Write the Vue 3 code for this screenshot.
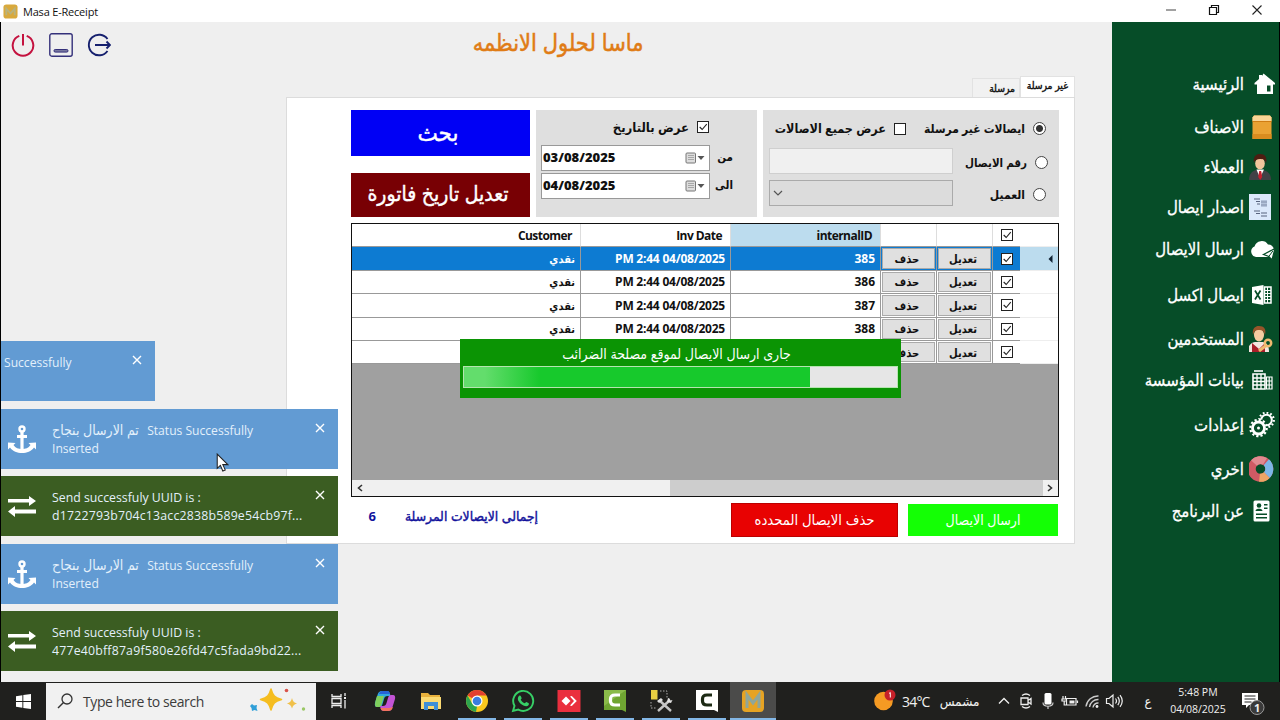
<script setup>
import { ref } from "vue";

// Menu lateral
const menu = ref([
  { icon: "home", label: "الرئيسية" },
  { icon: "box", label: "الاصناف" },
  { icon: "client", label: "العملاء" },
  { icon: "doc", label: "اصدار ايصال" },
  { icon: "cloud", label: "ارسال الايصال" },
  { icon: "excel", label: "ايصال اكسل" },
  { icon: "user", label: "المستخدمين" },
  { icon: "company", label: "بيانات المؤسسة" },
  { icon: "gears", label: "إعدادات" },
  { icon: "ring", label: "اخري" },
  { icon: "about", label: "عن البرنامج" },
]);

const receipts = ref([
  { id: "385", date: "PM 2:44 04/08/2025", customer: "نقدي" },
  { id: "386", date: "PM 2:44 04/08/2025", customer: "نقدي" },
  { id: "387", date: "PM 2:44 04/08/2025", customer: "نقدي" },
  { id: "388", date: "PM 2:44 04/08/2025", customer: "نقدي" },
  { id: "", date: "", customer: "" },
]);
const selected = ref(0);
const showAll = ref(false);
const progress = ref(80);

const toasts = ref([
  { type: "anchor", line1: "Successfully", line2: "", leaving: true },
  { type: "anchor", arabic: "تم الارسال بنجاح", line1: "  Status Successfully", line2: "Inserted" },
  { type: "swap", line1: "Send successfuly UUID is :", line2: "d1722793b704c13acc2838b589e54cb97f..." },
  { type: "anchor", arabic: "تم الارسال بنجاح", line1: "  Status Successfully", line2: "Inserted" },
  { type: "swap", line1: "Send successfuly UUID is :", line2: "477e40bff87a9f580e26fd47c5fada9bd22..." },
]);

const apps = ref([
  { icon: "tasks" },
  { icon: "copilot" },
  { icon: "folder" },
  { icon: "chrome", open: true },
  { icon: "whatsapp", open: true },
  { icon: "anydesk", open: true },
  { icon: "camtasia", open: true },
  { icon: "tools", open: true },
  { icon: "recorder", open: true },
  { icon: "masa", open: true, active: true },
]);
</script>

<template>
  <div class="screen">
    <header class="titlebar">
      <svg class="logo" viewBox="0 0 16 16">
        <rect x="0.5" y="0.5" width="15" height="15" rx="3" fill="#d9a93c" />
        <path d="M3.5 12V5l4.500 5 4.500-5v7" fill="none" stroke="#b9b27c" stroke-width="2" />
      </svg>
      <span class="app-name">Masa E-Receipt</span>
      <div class="win-buttons">
        <svg viewBox="0 0 12 12"><path d="M1 6h10" stroke="#444" /></svg>
        <svg viewBox="0 0 12 12"><path d="M1.500 3.500h7v7h-7zM3.500 3.500v-2h7v7h-2" fill="none" stroke="#111" stroke-width="1.200" /></svg>
        <svg viewBox="0 0 12 12"><path d="M1.500 1.500l9 9M10.500 1.500l-9 9" stroke="#222" stroke-width="1.100" /></svg>
      </div>
    </header>

    <div class="body">
      <main class="main">
        <div class="top">
          <div class="tools">
            <svg viewBox="0 0 24 24" class="tool">
              <path d="M8.300 2.900A10.300 10.300 0 1 0 15.700 2.900M12 1v11.500" fill="none" stroke="#c4123f" stroke-width="2" />
            </svg>
            <svg viewBox="0 0 24 24" class="tool">
              <rect x="0.800" y="0.800" width="22.400" height="22.400" rx="2" fill="none" stroke="#34307a" stroke-width="1.400" />
              <rect x="5" y="16.500" width="14" height="2.600" rx="1.200" fill="#77779f" stroke="#34307a" />
            </svg>
            <svg viewBox="0 0 24 24" class="tool">
              <path d="M20.500 6A10.300 10.300 0 1 0 20.500 18M8 12h15M19.500 8.500 23 12l-3.500 3.500" fill="none" stroke="#16206e" stroke-width="1.900" />
            </svg>
          </div>
          <h1 class="heading">ماسا لحلول الانظمه</h1>
        </div>

        <div class="tabs">
          <span class="tab active">غير مرسلة</span>
          <span class="tab">مرسلة</span>
        </div>

        <section class="panel">
          <div class="filters">
            <div class="box search-box">
              <label class="opt"><i class="radio on"></i>ايصالات غير مرسلة</label>
              <label class="opt all"><i class="check" :class="{ on: showAll }"></i>عرض جميع الاصالات</label>
              <label class="opt number"><i class="radio"></i>رقم الايصال</label>
              <div class="field"></div>
              <label class="opt"><i class="radio"></i>العميل</label>
              <div class="combo">
                <svg viewBox="0 0 10 6"><path d="M1 1l4 4 4-4" fill="none" stroke="#555" stroke-width="1.200" /></svg>
              </div>
            </div>

            <div class="box date-box">
              <label class="opt by-date">
                <i class="check on"><svg viewBox="0 0 12 12"><path d="M2 6l3 3 5.500-6.500" /></svg></i>عرض بالتاريخ
              </label>
              <span class="date-label">من</span>
              <div class="date">
                <b>03/08/2025</b>
                <svg viewBox="0 0 20 12">
                  <rect x="1" y="1" width="9.500" height="10" rx="1" fill="#ddd" stroke="#777" />
                  <path d="M3 3.500h6M3 5.500h6M3 7.500h6" stroke="#999" stroke-width="0.800" />
                  <path d="M12.500 4h7L16 8z" fill="#555" />
                </svg>
              </div>
              <span class="date-label">الى</span>
              <div class="date">
                <b>04/08/2025</b>
                <svg viewBox="0 0 20 12">
                  <rect x="1" y="1" width="9.500" height="10" rx="1" fill="#ddd" stroke="#777" />
                  <path d="M3 3.500h6M3 5.500h6M3 7.500h6" stroke="#999" stroke-width="0.800" />
                  <path d="M12.500 4h7L16 8z" fill="#555" />
                </svg>
              </div>
            </div>

            <div class="actions">
              <button class="btn-search">بحث</button>
              <button class="btn-edit-date">تعديل تاريخ فاتورة</button>
            </div>
          </div>

          <div class="grid">
            <div class="row head">
              <span class="cell"></span>
              <span class="cell c-check"><i class="check on"><svg viewBox="0 0 12 12"><path d="M2 6l3 3 5.500-6.500" /></svg></i></span>
              <span class="cell"></span>
              <span class="cell"></span>
              <span class="cell sorted">internalID</span>
              <span class="cell">Inv Date</span>
              <span class="cell">Customer</span>
            </div>
            <div v-for="(r, i) in receipts" :key="i" class="row" :class="{ selected: i === selected }">
              <span class="cell marker">
                <svg v-if="i === selected" viewBox="0 0 5 8"><path d="M4.500 0v8L0.500 4z" fill="#123" /></svg>
              </span>
              <span class="cell c-check"><i class="check on"><svg viewBox="0 0 12 12"><path d="M2 6l3 3 5.500-6.500" /></svg></i></span>
              <span class="cell c-btn"><button>تعديل</button></span>
              <span class="cell c-btn"><button>حذف</button></span>
              <span class="cell">{{ r.id }}</span>
              <span class="cell c-date"><bdo dir="ltr">{{ r.date }}</bdo></span>
              <span class="cell c-customer">{{ r.customer }}</span>
            </div>
            <div class="void"></div>
            <div class="scroll">
              <svg viewBox="0 0 6 8"><path d="M5 1L1.500 4 5 7" /></svg>
              <div class="track"><div class="thumb"></div></div>
              <svg viewBox="0 0 6 8"><path d="M1 1l3.500 3L1 7" /></svg>
            </div>

            <!-- Aviso de envio sobre a tabela -->
            <div class="sending">
              <p>جارى ارسال الايصال لموقع مصلحة الضرائب</p>
              <div class="bar"><div class="fill" :style="{ width: progress + '%' }"></div></div>
            </div>
          </div>

          <div class="footer">
            <button class="btn-send">ارسال الايصال</button>
            <button class="btn-delete">حذف الايصال المحدده</button>
            <span class="total-label">إجمالى الايصالات المرسلة</span>
            <span class="total">6</span>
          </div>
        </section>
      </main>

      <nav class="sidebar">
        <a v-for="item in menu" :key="item.icon" class="menu-item">
          <svg viewBox="0 0 26 26" class="menu-icon">
            <g v-if="item.icon === 'home'" fill="#fff">
              <path d="M14.500 2.500 26 12v1.500h-2V23H8v-9.500H5.500V12L10 8V4h3v1z" />
              <rect x="18" y="14.500" width="3.500" height="6" fill="#064d28" />
            </g>
            <g v-else-if="item.icon === 'box'">
              <path d="M3.500 3.500 5 1.500h16l1.500 2V25h-19z" fill="#eaa233" />
              <path d="M3.500 3.500 5 1.500h16l1.500 2V7h-19z" fill="#fbd596" />
              <path d="M3.500 7.500h19" stroke="#d07d13" />
              <path d="M3.500 20h19v5h-19z" fill="#d98c1f" />
            </g>
            <g v-else-if="item.icon === 'client'">
              <path d="M0 26c0-6 3-9 7-10h7c5 1 8 4 8 10z" fill="#414146" />
              <path d="M7.500 15.500 11 24l4-8.500z" fill="#fff" />
              <path d="M10.200 17h2l1 6-2 3-2-3z" fill="#c3202e" />
              <ellipse cx="11" cy="9.500" rx="4.800" ry="6" fill="#f0c69c" />
              <path d="M5 9C4 2.500 7 0 11 0c5 0 7.500 3 6 9.500-1-4-3-4.500-6-4.500S6 6 5 9z" fill="#4c1d12" />
            </g>
            <g v-else-if="item.icon === 'doc'">
              <rect x="0" y="0" width="22" height="26" fill="#dbe9fb" />
              <path d="M5 5h6M7 7.500h4M8 10h3M12 8h6M12 11h6M5 17h6M7 19.500h4M12 19h6M12 22h6" stroke="#58647f" stroke-width="1.200" />
              <path d="M12 6h6v7h-6z" fill="#9bacc6" opacity="0.600" />
            </g>
            <g v-else-if="item.icon === 'cloud'">
              <path d="M7 21a5.500 5.500 0 0 1-1.500-10.500A7.500 7.500 0 0 1 19 8.500a6 6 0 0 1 5 9.500c-1 2-3 3-5 3z" fill="#fff" />
              <path d="M14.500 18.500 26 12.500 23 24l-3.200-3.500z" fill="#fff" stroke="#064d28" stroke-width="1.300" />
              <path d="m19.800 20.500 4-5.500M19.500 20v3.500" stroke="#064d28" />
            </g>
            <g v-else-if="item.icon === 'excel'">
              <path d="M15.500 5h6.500v16h-6.500z" fill="none" stroke="#fff" stroke-width="1.500" />
              <path d="M15 8.500h7M15 11.500h7M15 14.500h7M15 17.500h7M18.500 5v16" stroke="#fff" />
              <path d="M3 5 14.500 3v20L3 21z" fill="#fff" />
              <path d="m6 8.500 5.500 9M11.500 8.500l-5.500 9" stroke="#064d28" stroke-width="1.700" />
            </g>
            <g v-else-if="item.icon === 'user'">
              <path d="M-1 26c0-6 2-9 7-10h8c4 1 6 4 6 10z" fill="#f3e4df" />
              <path d="M3 26v-9l7 6 6-6v9z" fill="#a91f2a" />
              <ellipse cx="10" cy="9" rx="5" ry="6.500" fill="#f5cba0" />
              <path d="M4 9C3 2.500 6 0 10 0c5 0 7.500 3 6 9-1-4-3-5-6-5S5 5 4 9z" fill="#97542a" />
              <circle cx="19" cy="17" r="3.200" fill="none" stroke="#f0b96f" stroke-width="2.500" />
              <path d="m17 19.500-7 5.500" stroke="#f0b96f" stroke-width="3" />
            </g>
            <g v-else-if="item.icon === 'company'" fill="none" stroke="#fff">
              <path d="M5 4h9" stroke-width="1.600" />
              <path d="M4 7h12v15H4z" stroke-width="1.600" />
              <path d="M8 7v15M12 7v15M4 11h12M4 14.500h12M4 18h12" stroke-width="1.300" />
              <path d="M17.500 10h5.500v12h-5.500zM20.200 10v12M17.500 14h5.500M17.500 18h5.500" stroke-width="1.200" />
            </g>
            <g v-else-if="item.icon === 'gears'" fill="none" stroke="#fff">
              <circle cx="17.500" cy="8" r="5.300" stroke-width="2" />
              <circle cx="17.500" cy="8" r="7.300" stroke-width="2.200" stroke-dasharray="1.800 2" />
              <circle cx="9.500" cy="16" r="9" fill="#064d28" stroke="none" />
              <circle cx="9.500" cy="16" r="6" stroke-width="2.800" />
              <circle cx="9.500" cy="16" r="8.200" stroke-width="2.200" stroke-dasharray="2.200 2.090" />
              <circle cx="9.500" cy="16" r="1.500" fill="#fff" stroke="none" />
            </g>
            <g v-else-if="item.icon === 'ring'" fill="none" stroke-width="8">
              <circle cx="11.500" cy="13" r="8.800" stroke="#cf5a64" />
              <path d="M5 7A8.800 8.800 0 0 1 16 5.400" stroke="#e08a90" />
              <path d="M17.300 6.300A8.800 8.800 0 0 1 17.800 19.100" stroke="#7cb7e8" />
              <path d="M17.800 19.100A8.800 8.800 0 0 1 10.500 21.700" stroke="#eda566" />
            </g>
            <g v-else>
              <rect x="4.500" y="2.500" width="16" height="21" rx="1.500" fill="#fff" />
              <g fill="#064d28">
                <circle cx="10" cy="7.500" r="2.300" />
                <path d="M6.500 13c0-3 7-3 7 0zM15 6h3.500v1.500H15zM15 9.500h3.500V11H15zM7 15.500h11V17H7zM7 19h11v1.500H7z" />
              </g>
            </g>
          </svg>
          <span>{{ item.label }}</span>
        </a>
      </nav>

      <!-- Notificações -->
      <div class="toasts">
        <div v-for="(t, i) in toasts" :key="i" class="toast" :class="[t.type, { leaving: t.leaving }]">
          <svg v-if="!t.leaving && t.type === 'anchor'" class="toast-icon" viewBox="0 0 28 28">
            <circle cx="14" cy="4" r="2.500" fill="none" stroke="#fff" stroke-width="2.400" />
            <path d="M14 6.500V25M9 11.500h10" fill="none" stroke="#fff" stroke-width="3.200" />
            <path d="M0 17.500 7.500 18l-2 2c2 3 5 4 8.500 4s6.500-1 8.500-4l-2-2 7.500-.5v7l-2-2c-3 4-7 5.500-12 5.500S5 26.500 2 22.500l-2 2z" fill="#fff" />
          </svg>
          <svg v-else-if="!t.leaving" class="toast-icon" viewBox="0 0 28 28">
            <path d="M0 7h21V4l7 5-7 5v-3.500H0zM28 17.500H7V14l-7 5.500L7 25v-3.500h21z" fill="#fff" />
          </svg>
          <div class="toast-text">
            <p><span v-if="t.arabic" class="toast-ar">{{ t.arabic }}</span>{{ t.line1 }}</p>
            <p class="line2">{{ t.line2 }}</p>
          </div>
          <svg class="toast-close" viewBox="0 0 10 10"><path d="M1 1l8 8M9 1L1 9" stroke="#fff" stroke-width="1.400" /></svg>
        </div>
      </div>

      <svg class="cursor" viewBox="0 0 12 18">
        <path d="M1 1v13.500l3-2.800L6.300 17l2.300-1-2.300-5H11z" fill="#fff" stroke="#222" />
      </svg>
    </div>

    <footer class="taskbar">
      <div class="start">
        <svg viewBox="0 0 16 16"><path d="M0 2.300 6.800 1.300v6.200H0zM7.800 1.100 16 0v7.500H7.800zM0 8.500h6.800v6.200L0 13.700zM7.800 8.500H16V16l-8.200-1.100z" fill="#fff" /></svg>
      </div>
      <div class="search">
        <svg class="lens" viewBox="0 0 16 16"><circle cx="10" cy="6" r="5" fill="none" stroke="#333" stroke-width="1.300" /><path d="M6.500 9.500 1 15" stroke="#333" stroke-width="1.400" /></svg>
        <span>Type here to search</span>
        <svg class="sparkle" viewBox="0 0 58 26">
          <path d="M22 1c2 7 3.500 8.500 10.500 10.500C25.500 13.500 24 15 22 22c-2-7-3.500-8.500-10.500-10.500C18.500 9.500 20 8 22 1z" fill="#f5bd1f" stroke="#f5bd1f" stroke-width="1.500" stroke-linejoin="round" />
          <path d="M43 10c1 3.500 2 4.500 5 5.500-3 1-4 2-5 5-1-3-2-4-5-5 3-1 4-2 5-5.500z" fill="#f0c04a" />
          <path d="m3 16 2 1.500 3-.5-.5 3 1 3-3-1-2.500 1-.5-3-1.500-2z" fill="#2f9fd8" />
          <circle cx="37.500" cy="2.500" r="1.800" fill="#d9534a" />
          <circle cx="54.500" cy="21" r="1.700" fill="#9ac765" />
        </svg>
      </div>

      <div v-for="a in apps" :key="a.icon" class="app" :class="{ open: a.open, active: a.active }">
        <svg viewBox="0 0 24 24">
          <g v-if="a.icon === 'tasks'" fill="none" stroke="#eee" stroke-width="1.300">
            <path d="M5 5v2.500h9V5M5 19v-2.500h9V19M5 9.500h9v5H5zM18 4v3M18 11v8.500" />
            <rect x="17" y="8" width="2" height="2" fill="#eee" stroke="none" />
          </g>
          <g v-else-if="a.icon === 'copilot'">
            <path d="M9 2h5c2 0 2.500 1 3 3l.5 2h-3c-2 0-3 1-3.500 3L9.500 15c-.5 2-1.500 3-3 3H4c-2 0-2.500-2-2-4l2.500-8C5.500 3 6.500 2 9 2z" fill="#31a8e0" />
            <path d="M2.500 12 4 7h7l-3 10-1.500 1H4c-2 0-2.500-2-1.500-6z" fill="#7fcf5c" />
            <path d="M15 22h-4c-2 0-3-1-3.500-3l-.5-2h3c2 0 3-1 3.500-3L15 9c.5-2 1.500-3 3-3h2c2 0 2.500 2 2 4l-2.500 8c-1 3-2 4-4.500 4z" fill="#c353d4" />
            <path d="M15 22h-4c-2 0-3-1-3.500-3h9l3.500-1c-1 3-2.500 4-5 4z" fill="#f2735f" />
            <path d="M9 2h5c2 0 2.500 1 3 3H6c.7-2 1.500-3 3-3z" fill="#2763d6" />
          </g>
          <g v-else-if="a.icon === 'folder'">
            <path d="M2 4h7l2 2h10v14H2z" fill="#e8b13c" />
            <path d="M2 8h20v12H2z" fill="#fbda72" />
            <path d="M5 13h14v8h-4v-4H9v4H5z" fill="#3f8fd6" />
          </g>
          <g v-else-if="a.icon === 'chrome'">
            <circle cx="12" cy="12" r="11" fill="#f8c81e" />
            <path d="M12 12 2.500 6.500A11 11 0 0 1 21.500 6.500H12z" fill="#e2402f" />
            <path d="M2.500 6.500 7.300 14.800 12 17.500l-1 5.400A11 11 0 0 1 2.500 6.500z" fill="#2da44e" />
            <circle cx="12" cy="12" r="5.500" fill="#fff" />
            <circle cx="12" cy="12" r="4.300" fill="#3b7de0" />
          </g>
          <g v-else-if="a.icon === 'whatsapp'">
            <path d="M2 22l1.500-5.200A10 10 0 1 1 7.300 20.600z" fill="none" stroke="#37cf66" stroke-width="1.900" />
            <path d="M8 7c.8-.8 1.500-.5 2 .5l.6 1.500c.2.700-.8 1.300-.8 1.700 1 1.800 2.200 2.800 4 3.600.6 0 1-1.300 1.600-1.200l2 1c.8.500.5 1.500 0 2.200-1 1.200-2.800 1.200-5 .2-2.300-1-4.200-3-5.200-5C6.500 9.700 6.900 8 8 7z" fill="#37cf66" />
          </g>
          <g v-else-if="a.icon === 'anydesk'">
            <rect x="0.500" y="1" width="23" height="22" fill="#ea2f3e" />
            <path d="M9 7.500 13.500 12 9 16.500 4.500 12z" fill="#fff" />
            <path d="m13 7.500 1.800-.5 5 5-5 5-1.800-.5 4-4.500z" fill="#fff" />
          </g>
          <g v-else-if="a.icon === 'camtasia'">
            <path d="M1 1h22v22l-4-2H1z" fill="#6fa532" />
            <path d="M1 1h22L1 17z" fill="#8abb4a" />
            <path d="M17 6h-5c-3 0-4.500 1.500-4.500 4v2c0 2.500 1.500 4 4.500 4h5" fill="none" stroke="#fff" stroke-width="3.200" />
          </g>
          <g v-else-if="a.icon === 'tools'">
            <rect x="2" y="1" width="6.500" height="9.500" fill="#e9cf42" />
            <path d="M11 2h7v7M2 13v6h5" fill="none" stroke="#aaa" stroke-dasharray="1.500 1.500" />
            <path d="m10 11 12 11M20 12 9 22" stroke="#c5c5c5" stroke-width="2.400" />
            <path d="m8 12 4-3 2 2-4 3zM19 9l-1 4 4 1 1.500-3-2 .5-1-2z" fill="#e2e2e2" />
          </g>
          <g v-else-if="a.icon === 'recorder'">
            <path d="M1 1h22v22l-4-2H1z" fill="#fff" />
            <path d="M17 6h-5c-3 0-4.500 1.500-4.500 4v2c0 2.500 1.500 4 4.500 4h5" fill="none" stroke="#1d2a15" stroke-width="3.200" />
          </g>
          <g v-else>
            <rect x="1" y="1" width="22" height="22" rx="4" fill="#e6a323" />
            <path d="M6 19V6l6 8 6-8v13" fill="none" stroke="#8fa69a" stroke-width="3" />
          </g>
        </svg>
      </div>

      <div class="weather">
        <svg viewBox="0 0 22 22">
          <circle cx="9.500" cy="12" r="9.300" fill="#f59a23" />
          <circle cx="16" cy="6" r="5.500" fill="#c5202a" />
          <path d="M15 4.500 16.300 3.500V8.500" fill="none" stroke="#fff" />
        </svg>
        <span>34°C</span>
        <span class="sunny">مشمس</span>
      </div>
      <div class="tray">
        <svg viewBox="0 0 18 18"><path d="M4 11.500 9 6.500l5 5" fill="none" stroke="#eee" stroke-width="1.400" /></svg>
        <svg viewBox="0 0 18 18"><path d="M5 3.500Q9 .5 13 3.500M5 14.500Q9 17.500 13 14.500M4 6h7v6.500H4zM11 8.500l3-2v5.500l-3-2" fill="none" stroke="#eee" stroke-width="1.300" /></svg>
        <svg viewBox="0 0 18 18"><rect x="5.500" y="1" width="7" height="11.500" rx="1.500" fill="#fff" /><path d="M4 10.500c0 5 10 5 10 0M9 14v3" fill="none" stroke="#ccc" stroke-width="1.200" /></svg>
        <svg viewBox="0 0 18 18"><path d="M5.500 6.500h9.500v6.500H5.500zM16.500 8.500v2.500M2 4v3M4.500 4v3M1 7h4.500v2H1zM3.200 9v4h3" fill="none" stroke="#eee" stroke-width="1.200" /><path d="M8.500 8.500h5v3h-5z" fill="#eee" /></svg>
        <svg viewBox="0 0 18 18"><path d="M3 14.500A12 12 0 0 1 15.500 4M6.500 15A8.500 8.500 0 0 1 15.500 7.500M10 15.500a5 5 0 0 1 5.500-4.500" fill="none" stroke="#ccc" stroke-width="1.400" /><circle cx="14" cy="14.500" r="1.400" fill="#eee" /></svg>
        <svg viewBox="0 0 18 18"><path d="M1.500 6.500h2.500L8 3v12l-4-3.500H1.500zM10.500 6.500q2 2.500 0 5M12.800 4.800q3 4.200 0 8.400M15 3.200q4.500 5.800 0 11.600" fill="none" stroke="#eee" stroke-width="1.200" /></svg>
        <span class="lang">ع</span>
      </div>
      <div class="clock"><span>5:48 PM</span><span>04/08/2025</span></div>
      <div class="notes">
        <svg viewBox="0 0 24 24">
          <path d="M1 2h16v12H8l-3 3v-3H1z" fill="#fff" />
          <path d="M3.500 5h11M3.500 8h11M3.500 11h7" stroke="#222" />
          <circle cx="16" cy="16.500" r="7" fill="#3a3a3a" stroke="#999" />
        </svg>
        <b>1</b>
      </div>
    </footer>
  </div>
</template>

<style>
body {
  background: #000;
  overflow: hidden;
}
</style>

<style scoped>
.screen {
  width: 1280px;
  height: 720px;
  display: flex;
  flex-direction: column;
  background: #efefef;
  font-family: "Open Sans", "DejaVu Sans Condensed", "DejaVu Sans", sans-serif;
  overflow: hidden;
}

.screen * {
  box-sizing: border-box;
}

svg {
  display: block;
  flex-shrink: 0;
}

p,
h1 {
  margin: 0;
}

button {
  font-family: inherit;
  border: 0;
  padding: 0;
}

.titlebar {
  height: 22px;
  flex-shrink: 0;
  display: flex;
  align-items: center;
  padding: 0 17px 0 3px;
  background: #fff;
}

.logo {
  width: 15px;
  height: 15px;
}

.app-name {
  margin-left: 5px;
  font-size: 11px;
  letter-spacing: -0.2px;
  color: #111;
}

.win-buttons {
  display: flex;
  gap: 31px;
  margin-left: auto;
  margin-top: -2px;
}

.win-buttons svg {
  width: 12px;
  height: 12px;
}

.body {
  position: relative;
  height: 660px;
  flex-shrink: 0;
  display: flex;
  border-left: 1px solid #000;
}

.main {
  width: 1111px;
}

.top {
  display: flex;
  height: 54px;
}

.tools {
  display: flex;
  gap: 14px;
  width: 471px;
  padding: 11px 0 0 10px;
}

.tool {
  width: 24px;
  height: 24px;
}

.heading {
  width: 172px;
  display: flex;
  justify-content: center;
  white-space: nowrap;
  direction: rtl;
  font-size: 23.3px;
  line-height: 40px;
  font-weight: normal;
  color: #e07c16;
  -webkit-text-stroke: 0.5px #e07c16;
}

.tabs {
  display: flex;
  direction: rtl;
  align-items: flex-end;
  height: 21px;
  padding-right: 37px;
}

.tab {
  width: 48px;
  height: 19px;
  padding-right: 4px;
  line-height: 18px;
  font-size: 10.3px;
  -webkit-text-stroke: 0.4px #111;
  white-space: nowrap;
  color: #111;
  border: 1px solid #e2e2e2;
  border-bottom: 0;
  background: #f1f1f1;
}

.tab.active {
  width: 55px;
  height: 21px;
  padding-right: 6px;
  line-height: 17px;
  background: #fff;
}

.panel {
  direction: rtl;
  width: 789px;
  height: 447px;
  margin-left: 285px;
  padding: 12px 15px 0 64px;
  background: #fff;
  border: 1px solid #dcdcdc;
}

.filters {
  display: flex;
  gap: 6px;
  height: 107px;
}

.box {
  background: #dfdfdf;
  color: #111;
  font-size: 13px;
  font-weight: bold;
}

.search-box {
  width: 296px;
  display: grid;
  grid-template-columns: 94px 184px;
  grid-template-rows: 37px 30px 35px;
  align-items: center;
  padding: 0 13px 0 5px;
}

.opt {
  display: flex;
  align-items: center;
  gap: 8px;
  white-space: nowrap;
  font-size: 12px;
}

.opt.all {
  margin-right: 46px;
  font-size: 12.5px;
}

.opt.number {
  margin-right: -2px;
  font-size: 11.5px;
}

.radio {
  width: 13px;
  height: 13px;
  flex-shrink: 0;
  border: 1px solid #444;
  border-radius: 50%;
  background: #fff;
}

.radio.on {
  background: radial-gradient(#333 0 3px, #fff 4px);
}

.check {
  width: 12px;
  height: 12px;
  flex-shrink: 0;
  border: 1px solid #222;
  background: #fff;
}

.check svg {
  width: 10px;
  height: 10px;
}

.check path {
  fill: none;
  stroke: #222;
  stroke-width: 1.3;
}

.field,
.combo {
  height: 26px;
  width: 184px;
  margin: -3px -1px 0 0;
  background: #f0f0f0;
  border: 1px solid #cfcfcf;
}

.combo {
  display: flex;
  align-items: center;
  justify-content: flex-end;
  padding-left: 3px;
  background: #dcdcdc;
  border-color: #aaa;
}

.combo svg {
  width: 10px;
  height: 6px;
}

.date-box {
  width: 221px;
  display: grid;
  grid-template-columns: 37px 169px;
  grid-template-rows: 34px 28px 28px;
  align-items: center;
  padding: 0 10px 0 5px;
}

.opt.by-date {
  grid-column: span 2;
  margin-right: 38px;
  font-size: 13px;
}

.date-label {
  padding-right: 14px;
  font-size: 11.5px;
  margin-top: -3px;
}

.date {
  direction: ltr;
  display: flex;
  align-items: center;
  justify-content: space-between;
  height: 26px;
  padding: 0 4px 0 1px;
  background: #fff;
  border: 1px solid #999;
}

.date b {
  margin-top: -2px;
}

.date svg {
  width: 20px;
  height: 12px;
}

.actions {
  width: 179px;
  display: flex;
  flex-direction: column;
  gap: 17px;
}

.actions button {
  height: 46px;
  padding: 0 5px 3px 0;
  color: #fff;
  font-size: 24px;
  -webkit-text-stroke: 0.4px #fff;
}

.btn-search {
  background: #0000f5;
}

.actions .btn-edit-date {
  height: 45px;
  background: #780004;
  font-size: 21px;
}

.grid {
  position: relative;
  display: flex;
  flex-direction: column;
  height: 274px;
  margin-top: 6px;
  border: 1px solid #111;
  background: #fff;
}

.row {
  display: grid;
  grid-template-columns: 38px 28px 56px 56px 150px 150px 1fr;
  height: 23.4px;
  flex-shrink: 0;
  font-size: 12px;
  font-weight: bold;
  color: #111;
}

.cell {
  display: flex;
  align-items: center;
  padding: 0 5px;
  border-bottom: 1px solid #999;
  border-left: 1px solid #999;
  white-space: nowrap;
}

.cell:first-child {
  border-left: 0;
  border-bottom-color: #eee;
}

.cell:last-child {
  border-left: 0;
}

.head .cell {
  padding-right: 8px;
  border-left-color: #ddd;
  letter-spacing: -0.55px;
}

.c-date {
  letter-spacing: -0.22px;
}

.c-customer {
  font-size: 11px;
}

.row .c-check {
  justify-content: center;
  padding: 0;
}

.sorted {
  background: #bcdcee;
}

.row.selected {
  color: #fff;
  background: #0d7bd2;
}

.selected .marker {
  justify-content: flex-start;
  background: #bcdcee;
}

.marker svg {
  width: 5px;
  height: 8px;
}

.c-btn {
  padding: 1px;
}

.c-btn button {
  width: 100%;
  height: 100%;
  padding-right: 3px;
  font-size: 11.2px;
  font-weight: bold;
  color: #111;
  background: #e0e0e0;
  border: 1px solid #aaa;
}

.void {
  flex: 1;
  background: #a0a0a0;
}

.scroll {
  direction: ltr;
  display: flex;
  align-items: center;
  height: 16px;
  padding: 0 5px;
  background: #f0f0f0;
}

.scroll svg {
  width: 6px;
  height: 8px;
}

.scroll path {
  fill: none;
  stroke: #333;
  stroke-width: 1.6;
}

.track {
  flex: 1;
  height: 16px;
  padding: 0 4px 0 307px;
}

.thumb {
  height: 16px;
  background: #cdcdcd;
}

.sending {
  position: absolute;
  left: 108px;
  top: 115px;
  width: 441px;
  height: 59px;
  padding: 0 3px;
  background: #0b9404;
  color: #fff;
  text-align: center;
}

.sending p {
  height: 27px;
  line-height: 30px;
  padding-right: 8px;
  font-size: 14px;
}

.bar {
  direction: ltr;
  height: 22px;
  background: #e6e6e6;
  border: 1px solid #b5e5b0;
}

.fill {
  height: 100%;
  background: linear-gradient(90deg, #63dd6c 0, #63dd6c 6%, #17c92c 22%);
}

.footer {
  display: flex;
  align-items: center;
  height: 34px;
  margin-top: 6px;
  padding-right: 1px;
  color: #12129c;
  font-size: 13px;
}

.footer button {
  padding-bottom: 2px;
  color: #fff;
  font-size: 14px;
}

.btn-send {
  width: 150px;
  height: 32px;
  background: #14ff05;
}

.footer .btn-delete {
  width: 167px;
  height: 34px;
  margin-right: 10px;
  font-size: 14.7px;
  background: #e80202;
  border: 1px solid #b00;
}

.total-label {
  width: 133px;
  margin-right: 193px;
  margin-top: -10px;
  white-space: nowrap;
  font-size: 13.8px;
  -webkit-text-stroke: 0.4px #12129c;
}

.total {
  margin-right: 29px;
  margin-top: -9px;
  font-weight: bold;
}

.sidebar {
  direction: rtl;
  display: grid;
  grid-template-rows: 44px 42px 38px 42px 42px 50px 38px 44px 46px 42px 42px;
  width: 168px;
  padding: 40px 4px 0 0;
  background: #064d28;
  border-right: 1px solid #000;
}

.menu-item {
  display: flex;
  align-items: center;
  gap: 5px;
  color: #fff;
  font-size: 16.6px;
  white-space: nowrap;
}

.menu-item span {
  margin-top: -2px;
  -webkit-text-stroke: 0.3px #fff;
}

.menu-icon {
  width: 26px;
  height: 26px;
}

.toasts {
  position: absolute;
  left: 0;
  top: 319px;
  display: flex;
  flex-direction: column;
  gap: 7.5px;
}

.toast {
  display: flex;
  width: 337px;
  height: 60px;
  padding: 13px 13px 0 7px;
  background: #629bd3;
  color: #e3f0fb;
  font-size: 12.1px;
}

.toast.swap {
  background: #3b5d22;
  font-size: 12.3px;
}

.swap .line2 {
  letter-spacing: 0.2px;
}

.toast.leaving {
  width: 154px;
  padding-left: 3px;
}

.toast-icon {
  width: 28px;
  height: 28px;
  margin: 3px 16px 0 0;
}

.toast-text {
  flex: 1;
  white-space: pre;
}

.toast-text p {
  height: 18px;
  line-height: 18px;
}

.toast-ar {
  margin-right: 2px;
  font-size: 14px;
  line-height: 16px;
}

.toast-close {
  width: 10px;
  height: 10px;
  margin-top: 1px;
}

.cursor {
  position: absolute;
  left: 215px;
  top: 431px;
  width: 13px;
  height: 19px;
}

.taskbar {
  height: 38px;
  display: flex;
  align-items: center;
  background: #20201e;
  color: #f0f0f0;
}

.start {
  width: 46px;
  padding-left: 16px;
}

.start svg {
  width: 15px;
  height: 15px;
}

.search {
  display: flex;
  align-items: center;
  width: 270px;
  height: 37px;
  padding-left: 11px;
  background: #f1f1f1;
  color: #3c3c3c;
  font-size: 14px;
  letter-spacing: -0.42px;
}

.lens {
  width: 16px;
  height: 16px;
  margin-right: 10px;
}

.sparkle {
  width: 58px;
  height: 26px;
  margin-left: auto;
  margin-right: 9px;
}

.app {
  width: 46px;
  height: 38px;
  display: flex;
  justify-content: center;
  align-items: center;
}

.app svg {
  width: 24px;
  height: 24px;
}

.app.open {
  background: linear-gradient(#83b7e6, #83b7e6) center bottom / 38px 2px no-repeat;
}

.app.active {
  background: linear-gradient(#83b7e6, #83b7e6) center bottom / 46px 2px no-repeat #4b4b4a;
}

.weather {
  display: flex;
  align-items: center;
  margin-left: 98px;
  font-size: 14px;
}

.weather span {
  letter-spacing: -0.8px;
}

.weather svg {
  width: 22px;
  height: 22px;
  margin: -2px 6px 0 0;
}

.weather .sunny {
  margin-left: 10px;
  font-size: 13.5px;
  letter-spacing: 0;
}

.tray {
  display: flex;
  align-items: center;
  gap: 4px;
  margin-left: auto;
}

.tray svg {
  width: 18px;
  height: 18px;
}

.lang {
  width: 30px;
  padding-left: 12px;
  text-align: center;
  font-size: 13px;
}

.clock {
  width: 58px;
  margin-left: 12px;
  display: flex;
  flex-direction: column;
  align-items: center;
  font-size: 10.5px;
  line-height: 17px;
}

.notes {
  position: relative;
  width: 24px;
  height: 24px;
  margin: 4px 15px 0 14px;
}

.notes b {
  position: absolute;
  left: 13px;
  top: 9px;
  font-size: 11px;
  line-height: 15px;
}
</style>
